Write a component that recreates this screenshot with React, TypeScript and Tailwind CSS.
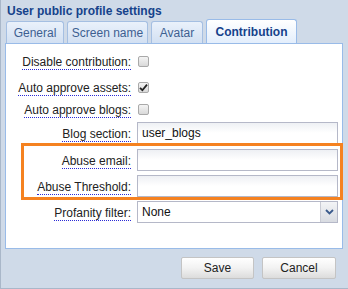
import React from 'react';

const font = "font-['Liberation_Sans',Arial,sans-serif]";

const Label = ({ children }: { children: React.ReactNode }) => (
  <div className="w-[126px] shrink-0 text-right pr-[1px]">
    <span className="text-[12px] text-[#222] border-b border-dotted border-[#2b2bd6] leading-[14px]">{children}</span>
  </div>
);

const Check = ({ checked }: { checked?: boolean }) => (
  <div className="ml-[6px] w-[11px] h-[11px] rounded-[2px] border border-[#a9a9a9] bg-gradient-to-b from-[#f4f4f4] to-[#d9d9d9] flex items-center justify-center">
    {checked && (
      <svg width="9" height="9" viewBox="0 0 9 9">
        <path d="M1 4.8 L3.4 7.2 L8 1.6" stroke="#222" strokeWidth="1.8" fill="none" />
      </svg>
    )}
  </div>
);

const Field = ({ value }: { value?: string }) => (
  <div className="ml-[5px] w-[201px] h-[22px] border border-[#b5b8c8] bg-gradient-to-b from-[#eef0f4] via-white to-white pl-[4px] flex items-center text-[12px] text-[#111]">
    {value}
  </div>
);

export default function App() {
  return (
    <div className={`${font} w-[348px] h-[289px] bg-[#cfdae8] border-l border-b border-[#a9b7c9] flex flex-col overflow-hidden`}>
      <div className="pl-[6px] pt-[4px] h-[19px] text-[12px] font-bold text-[#15428b] leading-[14px]">User public profile settings</div>

      <div className="flex items-end pl-[5px] h-[24px] gap-[3px]">
        <div className="w-[58px] h-[22px] rounded-t-[3px] border border-b-0 border-[#a5bfe2] bg-gradient-to-b from-[#eaf1fb] to-[#d2e0f2] flex items-center justify-center text-[12px] text-[#3d5f91]">General</div>
        <div className="w-[81px] h-[22px] rounded-t-[3px] border border-b-0 border-[#a5bfe2] bg-gradient-to-b from-[#eaf1fb] to-[#d2e0f2] flex items-center justify-center text-[12px] text-[#3d5f91]">Screen name</div>
        <div className="w-[52px] h-[22px] rounded-t-[3px] border border-b-0 border-[#a5bfe2] bg-gradient-to-b from-[#eaf1fb] to-[#d2e0f2] flex items-center justify-center text-[12px] text-[#3d5f91]">Avatar</div>
        <div className="w-[91px] h-[24px] rounded-t-[3px] border border-b-0 border-[#99bbe8] bg-gradient-to-b from-white to-[#e3eefc] flex items-center justify-center text-[12px] font-bold text-[#15428b]">Contribution</div>
      </div>

      <div className="relative ml-[4px] w-[338px] h-[206px] bg-white border border-[#99bbe8] flex flex-col pt-[6px]">
        <div className="flex items-center h-[22px]"><Label>Disable contribution:</Label><Check /></div>
        <div className="flex items-center h-[22px] mt-[4px]"><Label>Auto approve assets:</Label><Check checked /></div>
        <div className="flex items-center h-[22px]"><Label>Auto approve blogs:</Label><Check /></div>
        <div className="flex items-center h-[22px] mt-[2px]"><Label>Blog section:</Label><Field value="user_blogs" /></div>
        <div className="flex items-center h-[22px] mt-[5px]"><Label>Abuse email:</Label><Field /></div>
        <div className="flex items-center h-[22px] mt-[4px]"><Label>Abuse Threshold:</Label><Field /></div>
        <div className="flex items-center h-[22px] mt-[4px]">
          <Label>Profanity filter:</Label>
          <div className="ml-[5px] w-[201px] h-[22px] border border-[#b5b8c8] bg-white flex items-center">
            <span className="pl-[4px] flex-1 text-[12px] text-[#111]">None</span>
            <div className="w-[17px] h-full border-l border-[#c9cbd4] bg-gradient-to-b from-[#f3f4f6] to-[#d8dbe1] flex items-center justify-center">
              <svg width="9" height="6" viewBox="0 0 9 6">
                <path d="M1 1 L4.5 4.5 L8 1" stroke="#3a5a8c" strokeWidth="1.8" fill="none" />
              </svg>
            </div>
          </div>
        </div>

        <div className="absolute left-[15px] top-[99px] w-[322px] h-[57px] border-[3px] border-[#f58220]" />
      </div>

      <div className="flex justify-end gap-[8px] pr-[12px] mt-[8px]">
        <button className="w-[73px] h-[22px] rounded-[2px] border border-[#c4c4c4] bg-gradient-to-b from-white via-[#f2f2f2] to-[#dcdcdc] text-[12px] text-[#222]">Save</button>
        <button className="w-[74px] h-[22px] rounded-[2px] border border-[#c4c4c4] bg-gradient-to-b from-white via-[#f2f2f2] to-[#dcdcdc] text-[12px] text-[#222]">Cancel</button>
      </div>
    </div>
  );
}
